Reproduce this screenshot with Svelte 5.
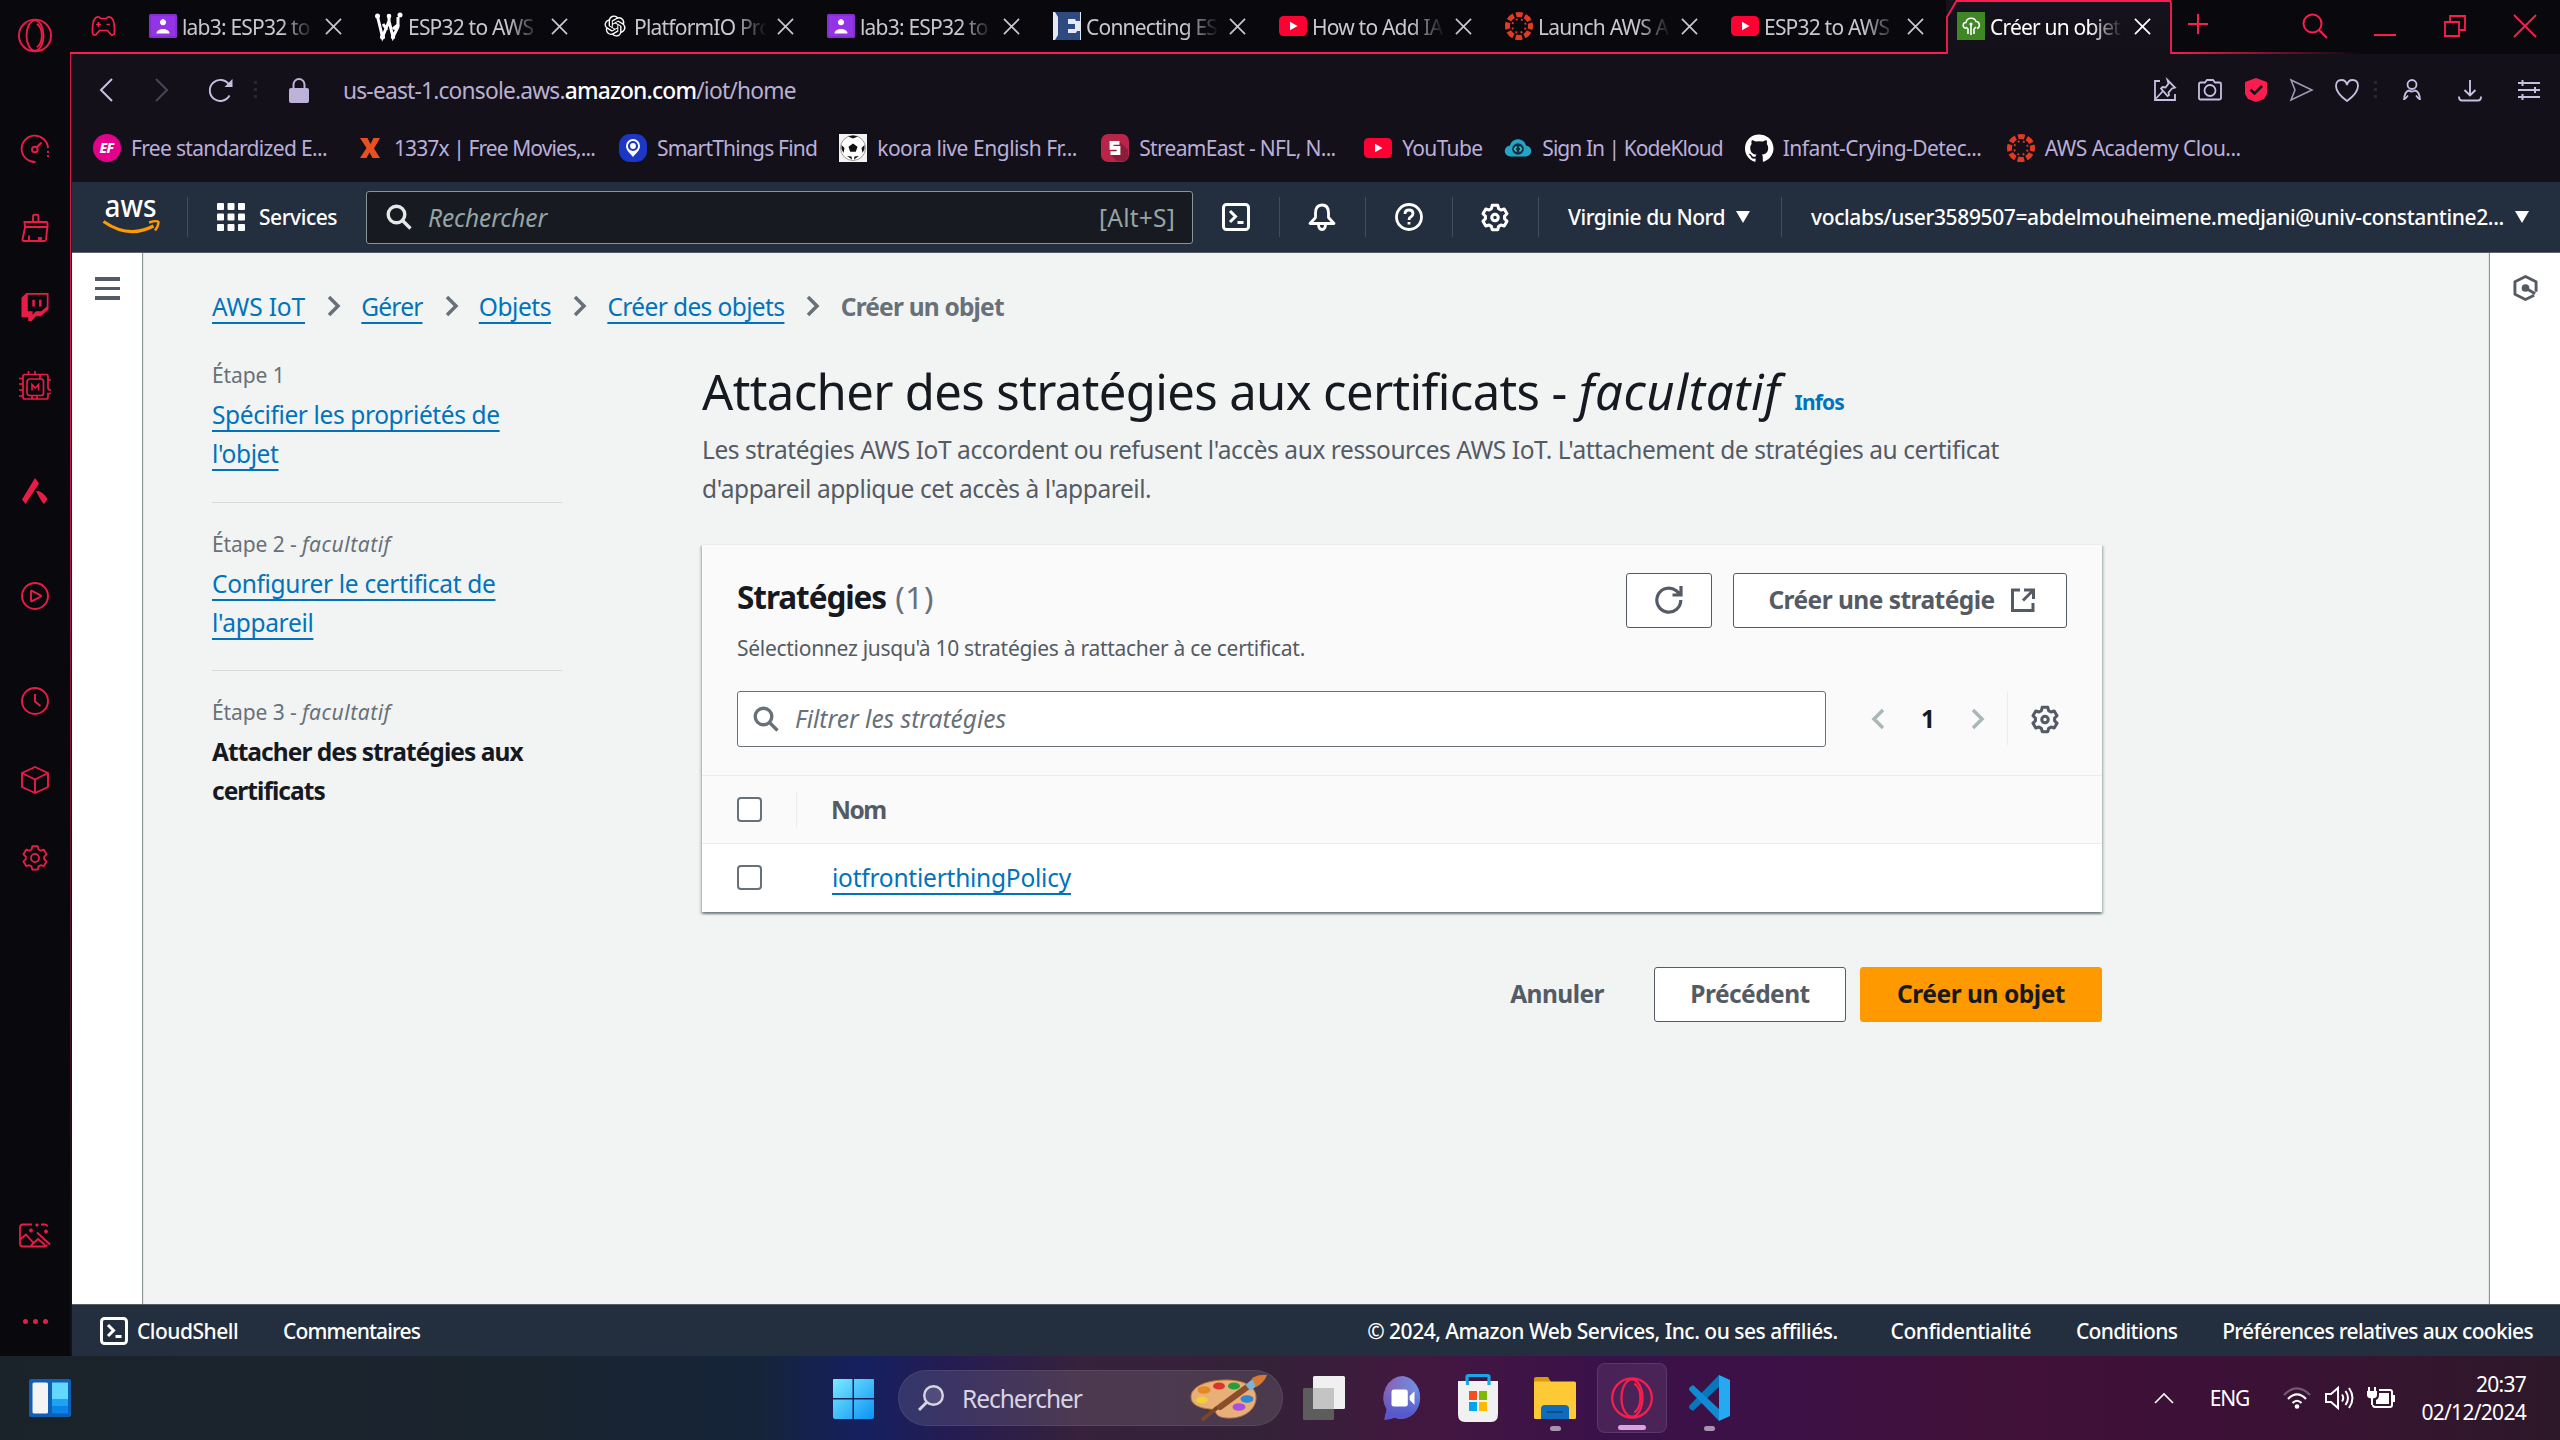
<script>
  const tabs = [
    { icon: 'classroom', title: 'lab3: ESP32 to' },
    { icon: 'wnode', title: 'ESP32 to AWS' },
    { icon: 'gpt', title: 'PlatformIO Pro' },
    { icon: 'classroom', title: 'lab3: ESP32 to' },
    { icon: 'efav', title: 'Connecting ES' },
    { icon: 'youtube', title: 'How to Add IA' },
    { icon: 'canvas', title: 'Launch AWS A' },
    { icon: 'youtube', title: 'ESP32 to AWS' },
    { icon: 'iot', title: 'Créer un objet', active: true }
  ];

  const bookmarks = [
    { icon: 'ef', title: 'Free standardized E...', wide: true },
    { icon: 'x1337', title: '1337x | Free Movies,...', wide: true },
    { icon: 'smart', title: 'SmartThings Find' },
    { icon: 'ball', title: 'koora live English Fr...', wide: true },
    { icon: 'stream', title: 'StreamEast - NFL, N...', wide: true },
    { icon: 'youtube', title: 'YouTube' },
    { icon: 'kode', title: 'Sign In | KodeKloud' },
    { icon: 'github', title: 'Infant-Crying-Detec...', wide: true },
    { icon: 'canvas', title: 'AWS Academy Clou...', wide: true }
  ];

  const crumbs = ['AWS IoT', 'Gérer', 'Objets', 'Créer des objets'];
</script>

{#snippet gearPath()}
  <path d="M9.6 2h4.8l.7 2.9 2 1.1 2.8-.9 2.4 4.1-2.1 2v2.400l2.100 2-2.400 4.100-2.800-.8-2 1.100-.7 2.900H9.600l-.7-2.900-2-1.100-2.800.8-2.400-4.100 2.100-2v-2.400l-2.100-2 2.400-4.100 2.800.9 2-1.100z" />
{/snippet}

{#snippet operaO(w)}
  <svg viewBox="0 0 36 36" class="i36 line" stroke-width={w}>
    <ellipse cx="18" cy="18" rx="17" ry="16.8" /><ellipse cx="18" cy="18" rx="9" ry="16" /><path d="M20 5.500c7 5 7 20 0 25" />
  </svg>
{/snippet}

{#snippet fav(name)}
  <svg viewBox="0 0 28 28" class="fav">
    {#if name === 'classroom'}
      <rect y="2" width="28" height="24" rx="1.500" fill="#8430ce" /><rect x="2" y="4" width="24" height="20" fill="#9334e6" />
      <path d="M14 7v6M11 10h6" stroke="#fff" stroke-width="2.600" /><circle cx="14" cy="10.500" r="2.800" fill="#fff" /><path d="M7.500 21.500c0-6 13-6 13 0z" fill="#fff" />
    {:else if name === 'wnode'}
      <g stroke="#fff" stroke-width="3" fill="none"><path d="M2.500 4.500 7.500 25 14 9l4 16 5-10V5M14 9V5M8 12l4 6M18 17l6-5" /></g>
      <g fill="#fff"><circle cx="2.500" cy="4" r="2.500" /><circle cx="14" cy="4" r="2.300" /><circle cx="25" cy="3" r="2.500" /><circle cx="7.500" cy="25" r="2.500" /><circle cx="18" cy="25" r="2.200" /></g>
    {:else if name === 'gpt'}
      <path fill="#fff" transform="translate(3.500 3.500) scale(.88)" d="M22.2819 9.8211a5.9847 5.9847 0 0 0-.5157-4.9108 6.0462 6.0462 0 0 0-6.5098-2.9A6.0651 6.0651 0 0 0 4.9807 4.1818a5.9847 5.9847 0 0 0-3.9977 2.9 6.0462 6.0462 0 0 0 .7427 7.0966 5.98 5.98 0 0 0 .511 4.9107 6.051 6.051 0 0 0 6.5146 2.9001A5.9847 5.9847 0 0 0 13.2599 24a6.0557 6.0557 0 0 0 5.7718-4.2058 5.9894 5.9894 0 0 0 3.9977-2.9001 6.0557 6.0557 0 0 0-.7475-7.0729zm-9.022 12.6081a4.4755 4.4755 0 0 1-2.8764-1.0408l.1419-.0804 4.7783-2.7582a.7948.7948 0 0 0 .3927-.6813v-6.7369l2.02 1.1686a.071.071 0 0 1 .038.052v5.5826a4.504 4.504 0 0 1-4.4945 4.4944zm-9.6607-4.1254a4.4708 4.4708 0 0 1-.5346-3.0137l.142.0852 4.783 2.7582a.7712.7712 0 0 0 .7806 0l5.8428-3.3685v2.3324a.0804.0804 0 0 1-.0332.0615L9.74 19.9502a4.4992 4.4992 0 0 1-6.1408-1.6464zM2.3408 7.8956a4.485 4.485 0 0 1 2.3655-1.9728V11.6a.7664.7664 0 0 0 .3879.6765l5.8144 3.3543-2.0201 1.1685a.0757.0757 0 0 1-.071 0l-4.8303-2.7865A4.504 4.504 0 0 1 2.3408 7.872zm16.5963 3.8558L13.1038 8.364 15.1192 7.2a.0757.0757 0 0 1 .071 0l4.8303 2.7913a4.4944 4.4944 0 0 1-.6765 8.1042v-5.6772a.79.79 0 0 0-.407-.667zm2.0107-3.0231l-.142-.0852-4.7735-2.7818a.7759.7759 0 0 0-.7854 0L9.409 9.2297V6.8974a.0662.0662 0 0 1 .0284-.0615l4.8303-2.7866a4.4992 4.4992 0 0 1 6.6802 4.66zM8.3065 12.863l-2.02-1.1638a.0804.0804 0 0 1-.038-.0567V6.0742a4.4992 4.4992 0 0 1 7.3757-3.4537l-.142.0805L8.704 5.459a.7948.7948 0 0 0-.3927.6813zm1.0976-2.3654l2.602-1.4998 2.6069 1.4998v2.9994l-2.5974 1.4997-2.6067-1.4997Z" />
    {:else if name === 'efav'}
      <rect width="28" height="28" fill="#e3e8f1" /><path d="M2 0h25v9h-4l-1-2h-7v5h7v5h-7v4h8l1-2h3v9H2l3-5V5z" fill="#2f4a80" />
    {:else if name === 'youtube'}
      <rect y="4" width="28" height="20" rx="4.500" fill="#ff0033" /><path d="M11 9.700v8.600l7.500-4.300z" fill="#fff" />
    {:else if name === 'canvas'}
      <circle cx="14" cy="14" r="11.500" fill="none" stroke="#e23b24" stroke-width="5" stroke-dasharray="6.600 2.430" stroke-dashoffset="3.300" />
      <circle cx="14" cy="14" r="6.800" fill="none" stroke="#e23b24" stroke-width="1.900" stroke-dasharray="1.900 3.440" stroke-dashoffset="-1.800" />
    {:else if name === 'iot'}
      <rect width="28" height="28" fill="#3f8624" /><path d="M9 16.500c-4-1-3.500-6 0-6 .5-5 8.500-6 10-1 4 0 4.500 6 1 7M14 12v11M11 22v-5l-2-2M17 22v-5l2-2" stroke="#fff" stroke-width="1.600" fill="none" /><circle cx="14" cy="12" r="1.600" fill="#fff" />
    {:else if name === 'ef'}
      <circle cx="14" cy="14" r="14" fill="#e3008c" /><text x="13.500" y="19" text-anchor="middle" fill="#fff" font-size="14" font-weight="800" font-style="italic">EF</text>
    {:else if name === 'x1337'}
      <path d="M4 4h7.500l3 6 3-6H24l-6 10.500L24 24h-7.500l-3-5.500-3 5.500H4l6.500-10z" fill="#e8501f" />
    {:else if name === 'smart'}
      <rect width="28" height="28" rx="11" fill="#1c36c6" /><path d="M14 23c-3-4-7-6.500-7-11a7 7 0 0 1 14 0c0 4.500-4 7-7 11z" fill="#fff" /><circle cx="14" cy="12" r="4" fill="none" stroke="#1c36c6" stroke-width="2.200" />
    {:else if name === 'ball'}
      <rect width="28" height="28" fill="#f3f3f3" /><circle cx="14" cy="14" r="12.500" fill="#fff" stroke="#999" /><path d="M14 9.500l4.500 3.200-1.700 5h-5.600l-1.700-5zM9 2.500l5 2 5-2-5-1zM2.500 11l3 3-1 5-2-4zM25.500 11l-3 3 1 5 2-4zM8 22l4.500.5.500 3zM20 22l-4.500.5-.5 3z" fill="#111" />
    {:else if name === 'stream'}
      <rect width="28" height="28" rx="7" fill="#b8254a" /><path d="M18 7l9 9v8l-3 3h-8l-7-7z" fill="#8d1c3a" /><path d="M18.500 8.800H10.500v5h7v5.400H9.500" stroke="#fff" stroke-width="3.800" fill="none" />
    {:else if name === 'kode'}
      <path d="M6 22.500c-7-1-7-10 0-11 2-8.500 14-8.500 16 0 7 1 7 10 0 11z" fill="#25a5c4" /><circle cx="14" cy="15" r="5.800" fill="#12304a" /><path d="M12.500 12.500l-2 2.500 2 2.500M15.500 12.500l2 2.500-2 2.500" stroke="#42d2c7" stroke-width="1.300" fill="none" />
    {:else if name === 'github'}
      <path fill="#fff" d="M14 .4a14 14 0 0 0-4.400 27.300c.7.100 1-.3 1-.7v-2.400c-3.900.8-4.700-1.900-4.700-1.900-.6-1.600-1.600-2-1.600-2-1.200-.9.100-.9.100-.9 1.400.1 2.200 1.500 2.200 1.500 1.200 2.100 3.300 1.500 4.100 1.200.1-.9.500-1.500.9-1.900-3.100-.4-6.400-1.600-6.400-6.900 0-1.500.5-2.800 1.500-3.800-.2-.4-.6-1.800.1-3.700 0 0 1.200-.4 3.900 1.400a13.400 13.400 0 0 1 7 0c2.700-1.800 3.900-1.400 3.900-1.400.7 1.900.3 3.300.1 3.700.9 1 1.500 2.300 1.500 3.800 0 5.400-3.300 6.500-6.400 6.900.5.400 1 1.300 1 2.600V27c0 .4.300.8 1 .7A14 14 0 0 0 14 .4z" />
    {/if}
  </svg>
{/snippet}

{#snippet chev()}
  <svg viewBox="0 0 13 22" class="chev"><path d="M2 2l9 9-9 9" /></svg>
{/snippet}

{#snippet shell()}
  <svg viewBox="0 0 28 28" class="i28 line" stroke-width="3"><rect x="1.500" y="1.500" width="25" height="25" rx="3" /><path d="M8 8l5.500 5.500L8 19M15.500 19.500h6" /></svg>
{/snippet}

{#snippet awsGear()}
  <svg viewBox="0 0 24 24" class="i28 line" stroke-width="2.600" stroke-linejoin="round">{@render gearPath()}<circle cx="12" cy="12.500" r="2.800" /></svg>
{/snippet}

{#snippet magnifier()}
  <svg viewBox="0 0 26 26" class="i26 line" stroke-width="3.400"><circle cx="10.500" cy="10.500" r="8.300" /><path d="M16.500 16.500l8 8" /></svg>
{/snippet}

<div class="screen">
  <div class="browser">
    <nav class="rail">
      <div class="cell first">{@render operaO(2)}</div>
      <div class="cell g1"><svg viewBox="0 0 28 28" class="i28 line" stroke-width="1.900"><path d="M14.500 27A13.200 13.200 0 1 1 27 13M27 16v2M27 20v2M16 12l4.500-4.500" /><circle cx="13.800" cy="14.500" r="2.800" /></svg></div>
      <div class="cell g2"><svg viewBox="0 0 28 28" class="i28 line" stroke-width="1.900"><path d="M12 8V2q0-1.200 1.200-1.200h3Q17.400.8 17.400 2v6M3.500 8h22q1 0 1 1v4H4zM4 13.500 1.500 25.500q-.2 1.500 1.200 1.500h20.800q1.300 0 1.500-1.300l1.300-12M8 26.500v-5M18 26.500v-3.500M20 26.500v-3.500" /></svg></div>
      <div class="cell g2"><svg viewBox="0 0 28 29" class="i28"><path d="M5 0h23v17l-8 7h-5l-4.500 5H7v-4H0V5zM6.500 1.800V19h5v3.500l3.500-3.500h5.500l5.700-5V1.800z" fill="currentColor" fill-rule="evenodd" /><path d="M12.500 7v7M19.500 7v7" stroke="currentColor" stroke-width="2.600" /></svg></div>
      <div class="cell g2"><svg viewBox="0 0 32 30" class="chip line" stroke-width="1.700"><path d="M29 12V5q0-1.500-1.500-1.500h-22Q4 3.500 4 5v21q0 2 2 2h21q2 0 2-2v-3.500h3M29 9h3M29 12v5q0 2 3 2M0 7.500h4M0 13h4M0 19h4M0 25h4M9.500 0v3.500M16 0v3.500M21 3.500V8M13 24.500V28M18 24.500V28" /><rect x="8" y="8" width="16.500" height="16.500" rx="2.500" /><path d="M13 19.500v-6l3.300 3.500 3.300-3.500v6" stroke-width="1.600" /></svg></div>
      <div class="cell g3"><svg viewBox="0 0 26 26" class="i26"><path d="M13 0 0 21.500 3.500 26 17 5.500zM14 13q6-1 11.500 8L22 26q-2-1-8-13z" fill="currentColor" /></svg></div>
      <div class="cell g3"><svg viewBox="0 0 28 28" class="i28 line" stroke-width="1.900"><circle cx="14" cy="14" r="13" /><path d="M10 9.500v9q0 1 1 .6l8.500-4.300q1-.8 0-1.400L11 8.900q-1-.4-1 .6z" /></svg></div>
      <div class="cell g3"><svg viewBox="0 0 28 28" class="i28 line" stroke-width="1.900"><circle cx="14" cy="14" r="13" /><path d="M14 7v7.500l5.500 4.500" /></svg></div>
      <div class="cell g4"><svg viewBox="0 0 28 28" class="i28 line" stroke-width="1.900" stroke-linejoin="round"><path d="M14 1l13 6v14l-13 6-13-6V7zM1 7l13 6.500L27 7M14 13.500V27" /></svg></div>
      <div class="cell g4"><svg viewBox="0 0 24 25" class="i28 line" stroke-width="1.600" stroke-linejoin="round">{@render gearPath()}<circle cx="12" cy="12.500" r="3.600" /></svg></div>
      <div class="cell last1"><svg viewBox="0 0 32 24" class="img line" stroke-width="1.800"><path d="M13 1H4Q1 1 1 4v16q0 3 3 3h21q2.500 0 3-2M1 16l6-5 8 9M12 22l7-6.500 7 6M18 9l13 12M22 1h4q2 0 2.500 2M12 5v4M10 7h4M18 0v3M16.500 1.500h3M27 6v4M25 8h4" /></svg></div>
      <div class="cell last2"><i class="dot"></i><i class="dot"></i><i class="dot"></i></div>
    </nav>

    <div class="main">
      <div class="strip">
        <div class="game"><svg viewBox="0 0 24 20" class="pad line" stroke-width="1.700"><path d="M4.500 1.500Q8 0 9 2.500h6Q16 0 19.500 1.500 23.500 4 23 17q-.5 2.500-3 2l-4-4.500H8L4 19q-2.500.5-3-2Q.5 4 4.500 1.500zM7 6v5M4.600 8.500h4.800M15 8.500h3.500" /></svg></div>
        {#each tabs as tab}
          <div class="tab" class:active={tab.active}>
            {#if tab.active}<svg viewBox="0 0 226 54" class="outline"><path d="M1 54V17L10.500 1H224l1 2v51" /></svg>{/if}
            {@render fav(tab.icon)}
            <span class="tabtext">{tab.title}</span>
            <svg viewBox="0 0 18 18" class="tabx"><path d="M1 1l16 16M17 1 1 17" /></svg>
          </div>
        {/each}
        <div class="rest">
          <div class="plus"><svg viewBox="0 0 20 20" class="i20 line" stroke-width="2"><path d="M10 0v20M0 10h20" /></svg></div>
          <div class="wins">
            <div><svg viewBox="0 0 26 26" class="i26 line" stroke-width="2"><circle cx="10.500" cy="10.500" r="9" /><path d="M17 17l8 8" /></svg></div>
            <div><svg viewBox="0 0 22 22" class="i22 line" stroke-width="2"><path d="M0 20h22" /></svg></div>
            <div><svg viewBox="0 0 22 22" class="i22 line" stroke-width="1.800"><path d="M1 7h14v14H1zM6 7V1h15v14h-6" /></svg></div>
            <div><svg viewBox="0 0 22 22" class="i22 line" stroke-width="1.800"><path d="M0 0l22 22M22 0 0 22" /></svg></div>
          </div>
        </div>
      </div>

      <div class="under">
        <div class="addr">
          <svg viewBox="0 0 14 24" class="nav line" stroke-width="2"><path d="M13 1 2 12l11 11" /></svg>
          <svg viewBox="0 0 14 24" class="nav fwd line" stroke-width="2"><path d="M1 1l11 11L1 23" /></svg>
          <svg viewBox="0 0 24 24" class="reload line" stroke-width="1.900"><path d="M20.500 17.500A10.500 10.500 0 1 1 20 6.500" /><path d="M23.500 1v8h-8z" fill="currentColor" stroke="none" /></svg>
          <span class="sep3"></span>
          <svg viewBox="0 0 20 25" class="lock"><rect y="10" width="20" height="15" rx="2" fill="currentColor" /><path d="M4.500 11V6.500a5.500 5.500 0 0 1 11 0V11" fill="none" stroke="currentColor" stroke-width="2" /></svg>
          <div class="url">us-east-1.console.aws.<b>amazon.com</b>/iot/home</div>
          <div class="tools">
            <div><svg viewBox="0 0 24 24" class="i24 line" stroke-width="1.800"><path d="M7 3H2v19h20v-6M3 20.500 10 13M14.500 2 22 9.500l-3 1-3.500 4 .5 2.500-1.500 1L8 10.500 9.500 9l3 .5 3-4z" /></svg></div>
            <div><svg viewBox="0 0 24 24" class="i24 line" stroke-width="1.800"><path d="M2.500 4.500H7l2-2.500h6l2 2.500h4.500Q23 4.500 23 6v14q0 1.500-1.500 1.500h-19Q1 21.500 1 20V6q0-1.500 1.500-1.500z" /><circle cx="12" cy="12.500" r="5.500" /></svg></div>
            <div><svg viewBox="0 0 22 24" class="i24"><path d="M11 0l11 4v12l-3 5-8 3-8-3-3-5V4z" fill="#fa1e4e" /><path d="M5.500 11.500l4 4 7.500-7.500" stroke="#15101c" stroke-width="2.600" fill="none" /></svg></div>
            <div><svg viewBox="0 0 24 24" class="i24 line dim" stroke-width="1.500"><path d="M2 2l21 10L2 22l4-10z" /></svg></div>
            <div><svg viewBox="0 0 24 24" class="i24 line" stroke-width="1.800"><path d="M12 23Q1 15 1 8q0-6 5.500-6Q11 2 12 7q1-5 5.500-5Q23 2 23 8q0 7-11 15z" /></svg></div>
            <span class="sep3 s2"></span>
            <div><svg viewBox="0 0 18 22" class="i22 line" stroke-width="1.800"><circle cx="9" cy="5.500" r="4.500" /><path d="M1 21q.5-8.500 5-9.500 2.500 2 6 0 4.500 1 5 9.500M5 16.500l-3 3.500M13 16.500l3 3.500" /></svg></div>
            <div><svg viewBox="0 0 24 24" class="i24 line" stroke-width="1.900"><path d="M12 2v15M6.500 12l5.500 5.500 5.500-5.500M1 18.500q0 4 3 4h16q3 0 3-4" /></svg></div>
            <div><svg viewBox="0 0 22 22" class="i22 line" stroke-width="2"><path d="M0 4h22M0 11h22M0 18h22M4.500 1v6M17 8v6M4.500 15v6" /></svg></div>
          </div>
        </div>

        <div class="marks">
          {#each bookmarks as b}
            <div class="mark" class:full={b.wide}>{@render fav(b.icon)}<span>{b.title}</span></div>
          {/each}
        </div>

        <header class="aws">
          <svg viewBox="0 0 56 36" class="logo"><text x="1.500" y="17.500" textLength="52" lengthAdjust="spacingAndGlyphs" fill="#fff" font-size="31" font-weight="500">aws</text><path d="M.5 22.500q25 17.500 50 4.500" fill="none" stroke="#ff9900" stroke-width="3.200" /><path d="M46 23.500q8-2.500 9.500-.5 0 4-3.500 8.500" fill="none" stroke="#ff9900" stroke-width="2.400" /></svg>
          <i class="vr"></i>
          <div class="services"><svg viewBox="0 0 28 28" class="i28">{#each [0, 10.5, 21] as y}{#each [0, 10.5, 21] as x}<rect {x} {y} width="7" height="7" rx="1" fill="#fff" />{/each}{/each}</svg><span class="med">Services</span></div>
          <div class="search">{@render magnifier()}<span class="ph">Rechercher</span><span class="alt">[Alt+S]</span></div>
          <div class="hicons">
            <div class="hi">{@render shell()}</div>
            <i class="vr"></i>
            <div class="hi"><svg viewBox="0 0 28 28" class="i28 line" stroke-width="2.800" stroke-linejoin="round"><path d="M14 2q-6.500 0-6.500 8v4.500L2 20.500h24L20.500 14.500V10q0-8-6.500-8zM10.500 21q0 5.500 3.500 5.500t3.500-5.500" /></svg></div>
            <i class="vr"></i>
            <div class="hi"><svg viewBox="0 0 28 28" class="i28 line" stroke-width="2.800"><circle cx="14" cy="14" r="12.500" /><path d="M10 11q0-4 4-4t4 3.500q0 2-2 3.200-2 1-2 3.300M14 19v2.500" /></svg></div>
            <i class="vr"></i>
            <div class="hi">{@render awsGear()}</div>
            <i class="vr"></i>
          </div>
          <div class="region"><span class="med">Virginie du Nord</span><i class="caret"></i></div>
          <i class="vr"></i>
          <div class="user"><span class="med">voclabs/user3589507=abdelmouheimene.medjani@univ-constantine2...</span><i class="caret"></i></div>
        </header>

        <div class="page">
          <aside class="drawer"><i></i><i></i><i></i></aside>
          <div class="body">
            <div class="crumbs">
              {#each crumbs as c}<a href="#top">{c}</a>{@render chev()}{/each}
              <b>Créer un objet</b>
            </div>
            <div class="cols">
              <div class="steps">
                <div class="step"><p>Étape 1</p><a href="#top">Spécifier les propriétés de<br />l'objet</a></div>
                <div class="step"><p>Étape 2 - <em>facultatif</em></p><a href="#top">Configurer le certificat de<br />l'appareil</a></div>
                <div class="step"><p>Étape 3 - <em>facultatif</em></p><b>Attacher des stratégies aux<br />certificats</b></div>
              </div>

              <div class="wizard">
                <h1><span>Attacher des stratégies aux certificats - <em>facultatif</em></span><a href="#top" class="info">Infos</a></h1>
                <p class="desc">Les stratégies AWS IoT accordent ou refusent l'accès aux ressources AWS IoT. L'attachement de stratégies au certificat<br />d'appareil applique cet accès à l'appareil.</p>

                <section class="card">
                  <div class="cardtop">
                    <div class="row1">
                      <h2><b>Stratégies</b> <span>(1)</span></h2>
                      <div class="btns">
                        <button class="btn refresh" aria-label="Actualiser"><svg viewBox="0 0 28 28" class="i28 line" stroke-width="3.200"><path d="M25.800 14A12 12 0 1 1 21 4.500l4.500 4M17.500 9H26V0" /></svg></button>
                        <button class="btn create"><span>Créer une stratégie</span><svg viewBox="0 0 24 24" class="i24 line" stroke-width="3"><path d="M9 2H1.500v20.500H22V15M13 2h9.500v9M22 2.500 12 12.500" /></svg></button>
                      </div>
                    </div>
                    <p class="sub">Sélectionnez jusqu'à 10 stratégies à rattacher à ce certificat.</p>
                    <div class="row2">
                      <div class="filter">{@render magnifier()}<em>Filtrer les stratégies</em></div>
                      <div class="pager"><span class="flip">{@render chev()}</span><b>1</b>{@render chev()}<i class="pv"></i><span class="pg">{@render awsGear()}</span></div>
                    </div>
                  </div>
                  <div class="tr th"><i class="cb"></i><i class="tv"></i><b>Nom</b></div>
                  <div class="tr"><i class="cb"></i><a href="#top">iotfrontierthingPolicy</a></div>
                </section>

                <div class="actions">
                  <button class="btn plain">Annuler</button>
                  <button class="btn prev">Précédent</button>
                  <button class="btn primary">Créer un objet</button>
                </div>
              </div>
            </div>
          </div>
          <aside class="drawer right"><svg viewBox="0 0 26 28" class="hex"><path d="M22 21.500 13 26 2 20.500v-13L13 2l11 5.500V18" fill="none" stroke="#545b64" stroke-width="3" stroke-linejoin="round" /><circle cx="13" cy="14" r="4" fill="#545b64" /><path d="M13 14l10 6" stroke="#545b64" stroke-width="3" /></svg></aside>
        </div>

        <footer class="foot">
          <div class="cs">{@render shell()}<span>CloudShell</span></div>
          <span class="com">Commentaires</span>
          <span class="cp">© 2024, Amazon Web Services, Inc. ou ses affiliés.</span>
          <span>Confidentialité</span>
          <span class="tight">Conditions</span>
          <span class="tight">Préférences relatives aux cookies</span>
        </footer>
      </div>
    </div>
  </div>

  <div class="taskbar">
    <svg viewBox="0 0 42 38" class="widgets"><rect width="42" height="38" rx="2" fill="#0f5fb4" /><rect x="3.500" y="3.500" width="15.500" height="31" rx="1.500" fill="#f4f4f4" /><rect x="23" y="3.500" width="16" height="17" fill="#63d8ff" /><rect x="23" y="20.500" width="16" height="7" fill="#1ba3f5" /><rect x="23" y="27.500" width="16" height="7" fill="#0a84ea" /></svg>
    <div class="apps">
      <div class="app win"><svg viewBox="0 0 41 41" class="i41"><defs><linearGradient id="wg" x1="0" y1="0" x2="1" y2="1"><stop offset="0" stop-color="#7cecff" /><stop offset="1" stop-color="#0a92f5" /></linearGradient><mask id="wm"><path fill="#fff" d="M0 1h19.500v19H0zM21 1h20v19H21zM0 21.500h19.500V41H0zM21 21.500h20V41H21z" /></mask></defs><rect width="41" height="41" rx="2" fill="url(#wg)" mask="url(#wm)" /></svg></div>
      <div class="pill">
        <svg viewBox="0 0 26 26" class="i26 line" stroke-width="2.400"><circle cx="15.500" cy="10.500" r="9.300" fill="#9a96b840" /><path d="M9 17l-8 8" stroke-width="3" /></svg>
        <span>Rechercher</span>
        <svg viewBox="0 0 78 46" class="palette">
          <path d="M36 5C55 5 67 12 66 24 65 36 52 44 37 43 22 42 29 35 20 34 8 33 1 29 1 22 1 11 18 5 36 5z" fill="#e8b078" stroke="#b9783f" />
          <path d="M12 45l16-13" stroke="#7b4526" stroke-width="4" /><path d="M30 32l30-22" stroke="#8a4f2a" stroke-width="6" stroke-linecap="round" /><path d="M58 13l7-6" stroke="#7fb2d0" stroke-width="8" /><path d="M62 3q7-4 15-3-3 8-11 12z" fill="#d97a32" />
          <ellipse cx="14" cy="15" rx="6.500" ry="3.800" fill="#e88624" /><ellipse cx="29" cy="11" rx="6" ry="3.600" fill="#d8352c" /><ellipse cx="44" cy="11" rx="6" ry="3.600" fill="#22a03c" /><ellipse cx="12" cy="25" rx="6" ry="3.600" fill="#f4cf35" /><ellipse cx="57" cy="24" rx="6.500" ry="3.800" fill="#3286d2" /><ellipse cx="49" cy="32" rx="6.500" ry="3.800" fill="#a94fe0" />
        </svg>
      </div>
      <div class="app"><svg viewBox="0 0 42 44" class="i42"><rect y="12" width="31" height="32" rx="1.500" fill="#5d5d5d" /><rect x="10" width="32" height="33" rx="1.500" fill="#f0f0f0" /><rect x="10" y="12" width="21" height="21" fill="#c4c4c4" /></svg></div>
      <div class="app chat"><svg viewBox="0 0 40 46" class="i42"><defs><linearGradient id="cg" x1="0" y1="0" x2="1" y2="0"><stop offset="0" stop-color="#8a5fae" /><stop offset="1" stop-color="#6d92e8" /></linearGradient><linearGradient id="cg2" x1="0" y1="0" x2="0" y2="1"><stop offset=".3" stop-color="#4f5bd0" stop-opacity="0" /><stop offset=".9" stop-color="#5558cc" /></linearGradient></defs><path d="M20 0a20 22.500 0 1 1-9 43.500Q6 46 .5 45.500L3 35A20 22.500 0 0 1 20 0z" fill="url(#cg)" /><path d="M20 0a20 22.500 0 1 1-9 43.500Q6 46 .5 45.500L3 35A20 22.500 0 0 1 20 0z" fill="url(#cg2)" /><rect x="8" y="14" width="17" height="18" rx="2.500" fill="#fff" /><path d="M27 21l5-5v14l-5-5z" fill="#fff" /></svg></div>
      <div class="app"><svg viewBox="0 0 40 48" class="i44"><path d="M9 12V3q0-1.500 1.500-1.500h19Q31 1.500 31 3v9" fill="none" stroke="#17a6e6" stroke-width="3.200" /><path d="M0 7h40v33q0 8-7 8H7q-7 0-7-8z" fill="#f1f1f2" /><path d="M9.500 7v4M31 7v4" stroke="#17a6e6" stroke-width="3.200" /><path d="M11 17h8v9h-8z" fill="#f25022" /><path d="M21 17h8v9h-8z" fill="#7fba00" /><path d="M11 28h8v9h-8z" fill="#00a4ef" /><path d="M21 28h8v9h-8z" fill="#ffb900" /></svg></div>
      <div class="app"><svg viewBox="0 0 42 42" class="i42"><path d="M0 2q0-2 2-2h12l3 5v6H0z" fill="#d99a0b" /><rect y="4.500" width="42" height="37.500" rx="1.500" fill="#fdc935" /><path d="M7 42V32q0-4 4-4h20q4 0 4 4v10z" fill="#0f6cbd" /><path d="M13 35h16" stroke="#0a4d8c" stroke-width="2" /></svg><i class="ind"></i></div>
      <div class="app on"><span class="op">{@render operaO(1.9)}</span><i class="ind wide"></i></div>
      <div class="app"><svg viewBox="0 0 42 46" class="i44"><path d="M31 0 2 30q-2 2 0 4l3 2L31 12z" fill="#0877b9" /><path d="M31 46 2 16q-2-2 0-4l3-2 26 24z" fill="#0f8ad3" /><path d="M31 0l11 5v36l-11 5z" fill="#27a9f1" /></svg><i class="ind"></i></div>
    </div>
    <div class="tray">
      <svg viewBox="0 0 18 11" class="up line" stroke-width="1.600"><path d="M0 10l9-9 9 9" /></svg>
      <span class="eng">ENG</span>
      <svg viewBox="0 0 28 22" class="wifi line" stroke-width="2.200"><path d="M1 8Q14-5 27 8" opacity=".3" /><path d="M5 12q9-9 18 0M9.500 16q4.500-4.500 9 0" /><circle cx="14" cy="19.500" r="2.300" fill="currentColor" stroke="none" /></svg>
      <svg viewBox="0 0 28 24" class="snd line" stroke-width="2"><path d="M1 8h5l7-6v20l-7-6H1zM17 8.500q2.500 3.500 0 7M20.500 5q5 7 0 14M24 2q7 10 0 20" /></svg>
      <svg viewBox="0 0 28 22" class="bat"><path d="M2 0v5M8 0v5" stroke="#fff" stroke-width="2" /><path d="M0 4h10v4q0 3-4 3.500V18H4v-6.500Q0 11 0 8z" fill="#fff" /><path d="M12 3h11q2 0 2 2v13q0 2-2 2H8q-2 0-2-2" fill="none" stroke="#fff" stroke-width="2" /><path d="M12 6h10v11H9v-4q3-1 3-5z" fill="#fff" /><path d="M26 8h2v7h-2z" fill="#fff" /></svg>
      <div class="clock">20:37<br />02/12/2024</div>
    </div>
  </div>
</div>

<style>
  :global(body) { margin: 0; background: #07060b; }
  .screen { width: 2560px; height: 1440px; overflow: hidden; font-family: 'Noto Sans', 'Open Sans', sans-serif; display: flex; flex-direction: column; }
  .browser { height: 1356px; display: flex; background: #09080d; }
  svg { display: block; flex: none; overflow: visible; }
  .line { fill: none; stroke: currentColor; }
  .i20 { width: 20px; height: 20px; } .i22 { width: 22px; height: 22px; } .i24 { width: 24px; height: 24px; }
  .i26 { width: 26px; height: 26px; } .i28 { width: 28px; height: 28px; } .i36 { width: 34px; height: 35px; }
  .i41 { width: 41px; height: 41px; } .i42 { width: 42px; height: 44px; } .i44 { width: 42px; height: 48px; }
  .fav { width: 28px; height: 28px; }

  /* Sidebar */
  .rail { width: 70px; flex: none; color: #e91c48; display: flex; flex-direction: column; }
  .cell { height: 40px; display: flex; align-items: center; justify-content: center; gap: 5px; }
  .first { margin-top: 15px; } .g1 { margin-top: 74px; } .g2 { margin-top: 39px; } .g3 { margin-top: 65px; } .g4 { margin-top: 38.5px; }
  .chip { width: 32px; height: 30px; } .img { width: 32px; height: 25px; }
  .last1 { margin-top: auto; } .last2 { margin-top: 46px; margin-bottom: 15px; }
  .dot { width: 5px; height: 5px; border-radius: 50%; background: #e91c48; }

  /* Tab strip */
  .main { flex: 1; display: flex; flex-direction: column; min-width: 0; }
  .strip { height: 54px; display: flex; color: #fa1e4e; }
  .game { width: 68px; box-sizing: border-box; border-bottom: 2px solid #fa1e4e; padding: 16px 0 0 21px; }
  .pad { width: 25px; height: 20px; }
  .tab { width: 226px; box-sizing: border-box; flex: none; border-bottom: 2px solid #fa1e4e; display: flex; align-items: center; padding-left: 11px; position: relative; color: #c9c7cf; }
  .tab.active { border-bottom: 0; padding-bottom: 2px; background: linear-gradient(#15121d, #13101a); color: #fff; }
  .outline { position: absolute; left: 0; top: 0; width: 226px; height: 54px; fill: none; stroke: #fa1e4e; stroke-width: 1.8; }
  .tabtext { margin-left: 5px; width: 133px; overflow: hidden; white-space: nowrap; font-size: 21px; line-height: 30px; letter-spacing: -.038em; margin-top: 2px; -webkit-mask-image: linear-gradient(90deg, #000 75%, transparent); mask-image: linear-gradient(90deg, #000 75%, transparent); }
  .tabx { width: 17px; height: 17px; margin-left: 10px; fill: none; stroke: currentColor; stroke-width: 1.8; }
  .active .tabx { margin-left: 11px; }
  .rest { flex: 1; display: flex; justify-content: space-between; padding-bottom: 2px; background: linear-gradient(90deg, #fa1e4e, #fa1e4e00 190px) 0 52px / 100% 2px no-repeat; }
  .plus { width: 52px; display: flex; align-items: center; justify-content: center; padding-bottom: 4px; }
  .wins { display: flex; }
  .wins div { width: 70px; display: flex; align-items: center; justify-content: center; }

  /* Address bar */
  .under { flex: 1; display: flex; flex-direction: column; padding-left: 2px; background: linear-gradient(#d01a43 30%, #50102800 90%) 0 0 / 1px 100% no-repeat, #13101a; }
  .addr { height: 72px; display: flex; align-items: center; color: #c8bfe0; padding-left: 27px; }
  .nav { width: 14px; height: 24px; } .fwd { margin-left: 42px; opacity: .3; }
  .reload { width: 24px; height: 24px; margin-left: 40px; }
  .sep3 { width: 3px; height: 18px; margin-left: 21px; background: repeating-linear-gradient(#2b2637 0 3px, transparent 3px 7px); }
  .lock { width: 20px; height: 25px; margin-left: 32px; color: #bdb2d8; }
  .url { font-size: 22.75px; letter-spacing: -.035em; color: #b9afd0; margin-left: 34px; flex: 1; }
  .url b { color: #fff; font-weight: 500; }
  .tools { display: flex; align-items: center; padding-right: 2px; }
  .tools div { width: 45.5px; display: flex; justify-content: center; }
  .tools .dim { opacity: .8; }
  .s2 { margin: 0 6px 0 4px; }
  .tools .s2 ~ div { width: 58.5px; }

  .marks { height: 43px; display: flex; gap: 22px; padding-left: 21px; align-items: center; margin-bottom: 13px; color: #b9afd8; font-size: 21px; letter-spacing: -.032em; }
  .mark { display: flex; align-items: center; gap: 10px; white-space: nowrap; }
  .mark.full { width: 241px; }
  .mark:nth-child(2) { letter-spacing: -.043em; }
  .mark:nth-child(3) { letter-spacing: -.038em; }
  .mark:nth-child(4) { letter-spacing: -.022em; margin-right: -1px; }
  .mark:nth-child(7) { letter-spacing: -.045em; }
  .mark:nth-child(n + 8) { letter-spacing: -.026em; }
  .mark:nth-child(8) { margin-right: -1px; }

  /* Console header */
  .aws { height: 70px; border-bottom: 1px solid #545b64; background: #232f3e; display: flex; align-items: center; color: #fff; font-size: 21px; white-space: nowrap; }
  .logo { width: 56px; height: 36px; margin-left: 31px; }
  .med { font-weight: 500; letter-spacing: -.022em; }
  .vr { width: 1px; height: 40px; background: #414d5c; }
  .logo + .vr { margin-left: 28px; }
  .services { display: flex; align-items: center; margin-left: 29px; gap: 14px; width: 149px; }
  .search { box-sizing: border-box; width: 827px; height: 53px; border: 1.5px solid #879596; border-radius: 3px; background: #171a21; display: flex; align-items: center; padding: 0 17px 0 19px; color: #e6e8e8; }
  .ph { margin-left: 16px; font-style: italic; font-size: 24.5px; color: #95a5a6; flex: none; letter-spacing: -.005em; }
  .alt { margin-left: auto; font-size: 24.5px; color: #95a5a6; letter-spacing: .009em; }
  .hicons { display: flex; align-items: center; }
  .hi { width: 85.5px; display: flex; justify-content: center; }
  .region { display: flex; align-items: center; gap: 11px; margin-left: 29px; width: 213px; }
  .caret { border: 7px solid transparent; border-top: 12px solid #fff; border-bottom: 0; }
  .user { display: flex; align-items: center; gap: 11px; margin-left: 29px; }
  .user .med { letter-spacing: -.018em; }

  /* Page */
  .page { flex: 1; display: flex; background: #f2f4f4; }
  .drawer { width: 70px; background: #fff; box-shadow: 1px 0 1px #8d9696; flex: none; display: flex; flex-direction: column; align-items: center; gap: 6px; padding-top: 24px; box-sizing: border-box; }
  .drawer i { width: 25px; height: 3.5px; background: #545b64; }
  .drawer.right { box-shadow: -1px 0 1px #8d9696; padding-top: 21px; }
  .hex { width: 25px; height: 28px; margin-left: 1px; }
  .body { flex: 1; padding: 34px 0 0 70px; font-size: 24.5px; color: #545b64; }
  a { color: #0073bb; text-decoration: underline; text-decoration-thickness: 2px; text-underline-offset: 6px; text-decoration-skip-ink: none; }
  .crumbs { display: flex; align-items: center; height: 38px; color: #687078; white-space: nowrap; }
  .crumbs a:nth-of-type(1) { letter-spacing: -.006em; }
  .crumbs a:nth-of-type(2), .crumbs b { letter-spacing: -.033em; }
  .crumbs a:nth-of-type(3) { letter-spacing: -.018em; }
  .crumbs a:nth-of-type(4) { letter-spacing: -.025em; }
  .crumbs .chev { margin: 0 21.3px 0 22px; }
  .chev { width: 13px; height: 22px; fill: none; stroke: currentColor; stroke-width: 3.5; }
  .cols { display: flex; }
  .steps { width: 350px; padding-top: 33px; line-height: 39px; }
  .step { padding-bottom: 28.5px; margin-bottom: 24px; border-bottom: 1px solid #d5dbdb; }
  .step:last-child { border: 0; }
  .step p { margin: 0 0 2px; font-size: 21px; line-height: 35px; color: #687078; letter-spacing: -.005em; }
  .step em { letter-spacing: .025em; }
  .step a { letter-spacing: -.016em; }
  .step:nth-child(2) a { letter-spacing: -.013em; }
  .step b { color: #16191f; font-weight: 700; letter-spacing: -.039em; white-space: nowrap; }
  .wizard { margin-left: 140px; width: 1400px; }
  h1 { margin: 36px 0 0; font-weight: 400; font-size: 49px; line-height: 60px; color: #16191f; display: flex; align-items: baseline; gap: 14px; white-space: nowrap; letter-spacing: -.013em; }
  h1 em { letter-spacing: .0135em; }
  .info { font-size: 21px; font-weight: 700; text-decoration: none; line-height: 30px; letter-spacing: -.04em; }
  .desc { margin: 9px 0 0; line-height: 39px; white-space: nowrap; letter-spacing: -.0177em; }
  .card { margin-top: 36px; border-top: 1px solid #eaeded; background: #fff; box-shadow: 0 2px 2px rgba(0, 28, 36, .35), 2px 2px 2px rgba(0, 28, 36, .15), -2px 2px 2px rgba(0, 28, 36, .15); }
  .cardtop { background: #fafafa; height: 230.5px; border-bottom: 1px solid #eaeded; padding: 27.5px 35px 0; box-sizing: border-box; }
  .row1 { display: flex; justify-content: space-between; }
  h2 { margin: -2px 0 0; font-size: 31.5px; line-height: 52px; font-weight: 400; color: #687078; }
  h2 b { color: #16191f; font-weight: 700; letter-spacing: -.034em; }
  h2 span { letter-spacing: .02em; margin-left: 1px; }
  .btns { display: flex; gap: 21px; }
  .btn { font: 700 24.5px/1 'Noto Sans', sans-serif; letter-spacing: -.022em; box-sizing: border-box; height: 55px; border: 1.5px solid #545b64; border-radius: 3px; background: #fff; color: #545b64; display: flex; align-items: center; justify-content: center; padding: 0; }
  .refresh { width: 86px; } .create { width: 334px; gap: 16px; padding-left: 3px; }
  .sub { margin: 3px 0 0; font-size: 21px; line-height: 35px; letter-spacing: -.0135em; }
  .row2 { margin-top: 25px; display: flex; align-items: center; }
  .filter { box-sizing: border-box; width: 1089px; height: 56px; border: 1.5px solid #687078; border-radius: 3px; background: #fff; display: flex; align-items: center; gap: 16px; padding-left: 15px; color: #687078; }
  .pager { display: flex; align-items: center; color: #aab7b8; margin-left: 46px; }
  .flip { transform: scaleX(-1); }
  .pager b { color: #16191f; width: 86px; text-align: center; }
  .pv { width: 1px; height: 53px; background: #eaeded; margin: 0 23px; }
  .pg { color: #545b64; }
  .tr { height: 68px; display: flex; align-items: center; padding-left: 35px; }
  .th { background: #fafafa; border-bottom: 1px solid #eaeded; height: 67px; }
  .cb { box-sizing: border-box; width: 25px; height: 25px; border: 2px solid #687078; border-radius: 4px; background: #fff; }
  .tv { width: 1px; height: 35px; background: #eaeded; margin-left: 34px; }
  .tr b { margin-left: 34px; letter-spacing: -.06em; } .tr a { margin-left: 70px; letter-spacing: -.0096em; }
  .actions { display: flex; justify-content: flex-end; gap: 14px; margin-top: 55.5px; }
  .plain { border: 0; background: none; margin-right: 36px; }
  .prev { width: 192px; } .primary { width: 242px; background: #ff9900; border-color: #ff9900; color: #16191f; letter-spacing: -.0185em; }

  .foot { height: 51px; border-top: 1.5px solid #545b64; background: #232f3e; color: #fff; display: flex; align-items: center; font-size: 21px; font-weight: 500; white-space: nowrap; gap: 45px; padding: 0 27px 0 28px; letter-spacing: -.024em; }
  .cs { display: flex; align-items: center; gap: 9px; }
  .com { letter-spacing: -.042em; }
  .tight { letter-spacing: -.032em; }
  .cp { margin-left: auto; margin-right: 8px; }

  /* Taskbar */
  .taskbar { height: 84px; color: #fff; display: flex; align-items: center; background: linear-gradient(90deg, #1a232a 0, #1a242e 500px, #16243a 760px, #152060 860px, #241c52 950px, #37213c 1080px, #342238 1260px, #431640 1440px, #3a114a 1600px, #3d1147 1780px, #411139 1980px, #3d1038 2200px, #35152f 2400px, #2c1829 2560px); }
  .widgets { width: 42px; height: 38px; margin-left: 29px; }
  .apps { display: flex; align-items: center; height: 84px; margin-left: 745px; }
  .app { width: 70px; height: 70px; box-sizing: border-box; margin-right: 7px; display: flex; align-items: center; justify-content: center; position: relative; }
  .win { margin-right: 7px; width: 75px; }
  .chat { padding-left: 3px; }
  .on { background: #ffffff14; border: 1px solid #ffffff18; border-radius: 8px; }
  .op { color: #fa1e4e; } .op .i36 { width: 42px; height: 42px; }
  .ind { position: absolute; bottom: 2px; width: 11px; height: 5px; border-radius: 3px; background: #a894b0; }
  .wide { width: 28px; background: #dca0e4; }
  .pill { width: 385px; height: 56px; box-sizing: border-box; border-radius: 28px; background: #ffffff1c; border: 1px solid #ffffff12; display: flex; align-items: center; padding: 0 14px 0 19px; font-size: 24.5px; letter-spacing: -.042em; color: #d8d4e4; gap: 18px; margin-right: 6px; }
  .palette { width: 78px; height: 46px; margin-left: auto; }
  .tray { margin-left: auto; display: flex; align-items: center; margin-right: 34px; font-size: 21px; letter-spacing: -.034em; }
  .up { width: 18px; height: 11px; } .eng { margin-left: 37px; letter-spacing: -.06em; }
  .wifi { width: 28px; height: 22px; margin-left: 34px; } .snd { width: 28px; height: 24px; margin-left: 14px; } .bat { width: 28px; height: 22px; margin-left: 14px; }
  .clock { text-align: right; width: 131px; line-height: 28px; }
</style>
